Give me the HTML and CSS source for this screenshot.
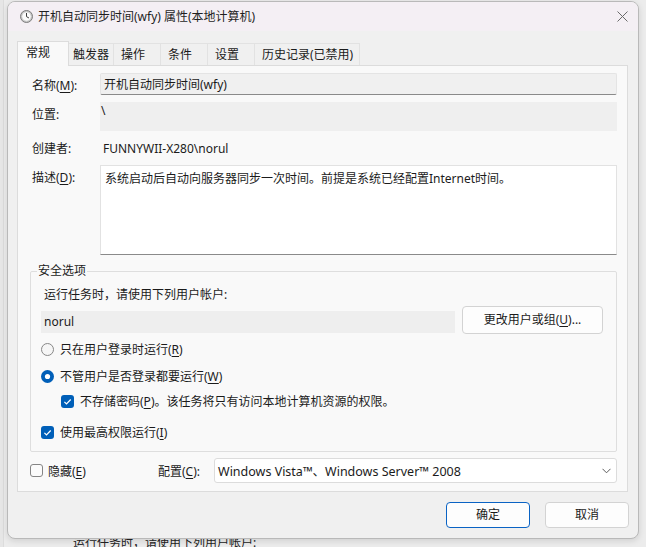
FILE: index.html
```html
<!DOCTYPE html>
<html lang="zh-CN">
<head>
<meta charset="utf-8">
<title>属性</title>
<link rel="stylesheet" href="styles.css">
</head>
<body>
<div class="desk">
  <div class="dialog">
    <div class="titlebar">
      <svg class="appicon" width="13" height="13" viewBox="0 0 13 13">
        <circle cx="6.5" cy="6.5" r="6" fill="#c9c9c9" stroke="#7d7d7d" stroke-width="1"/>
        <circle cx="6.5" cy="6.5" r="4.3" fill="#fbfbfb"/>
        <path d="M6.5 3.4 V6.6 L8.6 7.8" fill="none" stroke="#3a3a3a" stroke-width="1" stroke-linecap="round"/>
      </svg>
      <span class="title">开机自动同步时间(wfy) 属性(本地计算机)</span>
      <svg class="close" width="11" height="11" viewBox="0 0 11 11">
        <path d="M0.5 0.5 L10.5 10.5 M10.5 0.5 L0.5 10.5" stroke="#6a6a6a" stroke-width="1"/>
      </svg>
    </div>
    <div class="body">
      <div class="tabs">
        <div class="tab active">常规</div>
        <div class="tab w45">触发器</div>
        <div class="tab">操作</div>
        <div class="tab">条件</div>
        <div class="tab">设置</div>
        <div class="tab">历史记录(已禁用)</div>
      </div>
      <div class="panel">
        <div class="row">
          <div class="label">名称(<u>M</u>):</div>
          <div class="field field-name">开机自动同步时间(wfy)</div>
        </div>
        <div class="row row-loc">
          <div class="label">位置:</div>
          <div class="field field-loc">\</div>
        </div>
        <div class="row row-creator">
          <div class="label">创建者:</div>
          <div class="value">FUNNYWII-X280\norul</div>
        </div>
        <div class="row row-desc">
          <div class="label">描述(<u>D</u>):</div>
          <div class="field field-desc">系统启动后自动向服务器同步一次时间。前提是系统已经配置Internet时间。</div>
        </div>
        <fieldset class="security">
          <legend>安全选项</legend>
          <div class="account-label">运行任务时，请使用下列用户帐户:</div>
          <div class="account-row">
            <div class="account-field">norul</div>
            <div class="btn btn-change">更改用户或组(<u>U</u>)...</div>
          </div>
          <div class="opt opt-first">
            <svg class="mark" width="13" height="13" viewBox="0 0 13 13"><circle cx="6.5" cy="6.5" r="6" fill="#f6f6f6" stroke="#878787" stroke-width="1"/></svg>
            <span>只在用户登录时运行(<u>R</u>)</span>
          </div>
          <div class="opt opt-second">
            <svg class="mark" width="13" height="13" viewBox="0 0 13 13"><circle cx="6.5" cy="6.5" r="6.5" fill="#005fb8"/><circle cx="6.5" cy="6.5" r="2.6" fill="#ffffff"/></svg>
            <span>不管用户是否登录都要运行(<u>W</u>)</span>
          </div>
          <div class="opt opt-third">
            <svg class="mark" width="13" height="13" viewBox="0 0 13 13"><rect x="0" y="0" width="13" height="13" rx="3" fill="#005fb8"/><path d="M3.4 6.9 L5.5 9 L9.7 4.5" fill="none" stroke="#ffffff" stroke-width="1.2"/></svg>
            <span>不存储密码(<u>P</u>)。该任务将只有访问本地计算机资源的权限。</span>
          </div>
          <div class="opt opt-fourth">
            <svg class="mark" width="13" height="13" viewBox="0 0 13 13"><rect x="0" y="0" width="13" height="13" rx="3" fill="#005fb8"/><path d="M3.4 6.9 L5.5 9 L9.7 4.5" fill="none" stroke="#ffffff" stroke-width="1.2"/></svg>
            <span>使用最高权限运行(<u>I</u>)</span>
          </div>
        </fieldset>
        <div class="bottom-row">
          <div class="hidden-opt">
            <svg class="mark" width="13" height="13" viewBox="0 0 13 13"><rect x="0.5" y="0.5" width="12" height="12" rx="2.5" fill="#fbfbfb" stroke="#858585" stroke-width="1"/></svg>
            <span>隐藏(<u>E</u>)</span>
          </div>
          <div class="config-label">配置(<u>C</u>):</div>
          <div class="select">
            <span>Windows Vista™、Windows Server™ 2008</span>
            <svg class="chev" width="9" height="6" viewBox="0 0 9 6"><path d="M0.5 0.8 L4.5 4.8 L8.5 0.8" fill="none" stroke="#5c5c5c" stroke-width="1"/></svg>
          </div>
        </div>
      </div>
      <div class="buttons">
        <div class="btn btn-ok">确定</div>
        <div class="btn btn-cancel">取消</div>
      </div>
    </div>
  </div>
  <div class="behind">运行任务时，请使用下列用户帐户:</div>
</div>
</body>
</html>
```
FILE: styles.css
```css
* { box-sizing: border-box; }
html, body { margin: 0; padding: 0; }
body {
  background: #e9e9e9;
  font-family: "Noto Sans", "Noto Sans CJK SC", sans-serif;
  font-size: 12px;
  color: #1b1b1b;
}
u { text-decoration: underline; text-underline-offset: 2px; text-decoration-thickness: 1px; }
.desk {
  width: 646px;
  height: 547px;
  overflow: hidden;
  background: linear-gradient(to right, #e6e6e6 0, #e6e6e6 3px, #dcdcdc 3px, #dcdcdc 4px, #ececec 4px);
}
.dialog {
  position: relative;
  z-index: 1;
  margin: 1px 0 0 7px;
  width: 632px;
  height: 538px;
  border: 1px solid #b9b9b9;
  border-radius: 8px;
  background: #f0f0f0;
  overflow: hidden;
  box-shadow: 0 2px 6px rgba(0,0,0,0.12);
}
.titlebar {
  height: 29px;
  background: #f4eff4;
  display: flex;
  align-items: center;
  padding-left: 12px;
}
.appicon { flex: none; }
.title { margin-left: 5px; line-height: 16px; color: #1f1f1f; }
.close { margin-left: auto; margin-right: 10px; flex: none; }
.body { padding: 0 0 10px 0; }
.tabs {
  margin-top: 10px;
  height: 24px;
  padding-left: 9px;
  display: flex;
  align-items: flex-end;
}
.tab {
  height: 22px;
  min-width: 48px;
  padding: 0 6px 0 7px;
  line-height: 21px;
  background: #f0f0f0;
  border: 1px solid #e2e2e2;
  border-bottom: none;
  margin-left: -1px;
  white-space: nowrap;
}
.tab.w45 { min-width: 45px; padding: 0 4px; }
.tab.active {
  position: relative;
  z-index: 2;
  height: 25px;
  width: 52px;
  margin-left: 0;
  margin-bottom: -1px;
  padding: 0 8px;
  line-height: 22px;
  background: #f9f9f9;
  border-color: #dcdcdc;
}
.panel {
  margin: 0 10px 0 9px;
  height: 427px;
  background: #f9f9f9;
  border: 1px solid #dcdcdc;
  padding: 7px 10px 8px 14px;
}
.row { display: grid; grid-template-columns: 68px 1fr; align-items: start; }
.label { padding-top: 5px; line-height: 16px; white-space: nowrap; }
.field {
  background: #f0f0f0;
  line-height: 16px;
}
.field-name {
  height: 22px;
  padding: 3px 3px;
  border: 1px solid #e4e4e4;
  border-bottom: 1px solid #8a8a8a;
  border-radius: 2px;
}
.row-loc { margin-top: 7px; }
.field-loc { height: 29px; background: #efefef; padding: 1px 0 0 1px; }
.row-creator { margin-top: 8px; }
.row-creator .label { padding-top: 2px; }
.value { line-height: 20px; padding-left: 3px; }
.row-desc { margin-top: 6px; }
.field-desc {
  height: 90px;
  background: #ffffff;
  border: 1px solid #e2e2e2;
  border-bottom: 1px solid #8a8a8a;
  padding: 5px 4px;
}
.security {
  margin: 8px 0 0 -2px;
  padding: 6px 10px 9px 10px;
  border: 1px solid #dedede;
  border-radius: 2px;
  min-width: 0;
}
.security legend {
  margin-left: -4px;
  padding: 0 1px;
  line-height: 16px;
}
.account-label { line-height: 20px; padding-left: 3px; }
.account-row { margin-top: 1px; height: 28px; display: flex; align-items: center; }
.account-field {
  width: 414px;
  height: 22px;
  align-self: flex-start;
  margin-top: 5px;
  background: #eeeeee;
  padding-left: 3px;
  line-height: 21px;
}
.btn {
  height: 28px;
  border: 1px solid #d3d3d3;
  border-radius: 4px;
  background: #fdfdfd;
  text-align: center;
  line-height: 26px;
  white-space: nowrap;
}
.btn-change { margin-left: 7px; width: 141px; }
.opt { display: flex; align-items: center; height: 20px; }
.opt .mark { flex: none; margin-right: 6px; }
.opt-first { margin-top: 5px; }
.opt-second { margin-top: 7px; }
.opt-third { margin-top: 5px; margin-left: 20px; }
.opt-fourth { margin-top: 11px; }
.bottom-row {
  margin-top: 6px;
  margin-left: -2px;
  height: 25px;
  display: flex;
  align-items: center;
}
.hidden-opt { width: 128px; display: flex; align-items: center; }
.hidden-opt .mark { margin-right: 5px; flex: none; }
.config-label { width: 56px; }
.select {
  flex: 1;
  height: 25px;
  background: #ffffff;
  border: 1px solid #dcdcdc;
  border-radius: 3px;
  display: flex;
  align-items: center;
  padding: 0 0 0 3px;
  font-size: 12.5px;
}
.chev { margin-left: auto; margin-right: 5px; }
.buttons {
  margin-top: 10px;
  padding-right: 9px;
  display: flex;
  justify-content: flex-end;
  gap: 15px;
}
.btn-ok, .btn-cancel { width: 84px; height: 26px; line-height: 24px; }
.btn-ok { border-color: #0a63c4; }
.behind {
  margin: -4px 0 0 73px;
  line-height: 16px;
  color: #222;
}
```
